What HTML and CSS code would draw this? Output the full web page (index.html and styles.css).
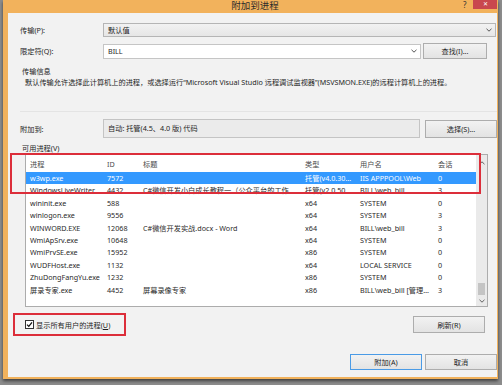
FILE: index.html
```html
<!DOCTYPE html>
<html lang="zh-CN">
<head>
    <meta charset="UTF-8">
    <meta name="viewport" content="width=device-width, initial-scale=1.0">
    <title>附加到进程</title>
    <link rel="stylesheet" href="styles.css">
</head>
<body>
    <div class="window">
        <div class="titlebar">
            <span class="title">附加到进程</span>
            <span class="help">?</span>
            <span class="close">&#x2715;</span>
        </div>

        <div class="content">
            <div class="field-row row-transport">
                <label>传输(P):</label>
                <div class="combo combo-readonly">
                    <span>默认值</span>
                    <svg class="arrow" width="6" height="4" viewBox="0 0 6 4"><path d="M0.5 0.8 L3 3.2 L5.5 0.8" fill="none" stroke="#555" stroke-width="1"/></svg>
                </div>
            </div>

            <div class="field-row row-qualifier">
                <label>限定符(Q):</label>
                <div class="combo combo-edit">
                    <span>BILL</span>
                    <svg class="arrow" width="6" height="4" viewBox="0 0 6 4"><path d="M0.5 0.8 L3 3.2 L5.5 0.8" fill="none" stroke="#555" stroke-width="1"/></svg>
                </div>
                <button class="btn btn-find">查找(I)...</button>
            </div>

            <div class="group">
                <div class="group-title">传输信息</div>
                <p class="group-text">默认传输允许选择此计算机上的进程，或选择运行“Microsoft Visual Studio 远程调试监视器”(MSVSMON.EXE)的远程计算机上的进程。</p>
            </div>

            <div class="field-row row-attach">
                <label>附加到:</label>
                <div class="readonly-field">自动: 托管(4.5、4.0 版) 代码</div>
                <button class="btn btn-select">选择(S)...</button>
            </div>

            <div class="group-title list-title">可用进程(V)</div>

            <div class="listview">
                <div class="table" id="processTable">
                    <div class="row header">
                        <span>进程</span><span>ID</span><span>标题</span><span>类型</span><span>用户名</span><span>会话</span>
                    </div>
                </div>
                <div class="scrollbar">
                    <div class="sb-arrow sb-up">
                        <svg width="6" height="4" viewBox="0 0 6 4"><path d="M0.5 3.2 L3 0.8 L5.5 3.2" fill="none" stroke="#606060" stroke-width="1"/></svg>
                    </div>
                    <div class="sb-track"><div class="sb-thumb"></div></div>
                    <div class="sb-arrow sb-down">
                        <svg width="6" height="4" viewBox="0 0 6 4"><path d="M0.5 0.8 L3 3.2 L5.5 0.8" fill="none" stroke="#606060" stroke-width="1"/></svg>
                    </div>
                </div>
            </div>

            <div class="options-row">
                <div class="check">
                    <svg width="9" height="9" viewBox="0 0 9 9"><rect x="0.5" y="0.5" width="8" height="8" fill="#fff" stroke="#333"/><path d="M2 4.6 L3.8 6.4 L7 2.4" fill="none" stroke="#111" stroke-width="1.3"/></svg>
                    <span>显示所有用户的进程(<u>U</u>)</span>
                </div>
                <button class="btn btn-refresh">刷新(R)</button>
            </div>

            <div class="dialog-buttons">
                <button class="btn btn-default">附加(A)</button>
                <button class="btn btn-cancel">取消</button>
            </div>
        </div>
    </div>

    <!-- annotation boxes from the screenshot -->
    <div class="mark mark-list"></div>
    <div class="mark mark-check"></div>

    <script>
        const processes = [
            ['w3wp.exe', '7572', '', '托管(v4.0.30…', 'IIS APPPOOL\\Web', '0', true],
            ['WindowsLiveWriter…', '4432', 'C#微信开发小白成长教程一（公众平台的工作…', '托管(v2.0.50…', 'BILL\\web_bill', '3'],
            ['wininit.exe', '588', '', 'x64', 'SYSTEM', '0'],
            ['winlogon.exe', '9556', '', 'x64', 'SYSTEM', '3'],
            ['WINWORD.EXE', '12068', 'C#微信开发实战.docx - Word', 'x64', 'BILL\\web_bill', '3'],
            ['WmiApSrv.exe', '10648', '', 'x64', 'SYSTEM', '0'],
            ['WmiPrvSE.exe', '15952', '', 'x86', 'SYSTEM', '0'],
            ['WUDFHost.exe', '1132', '', 'x64', 'LOCAL SERVICE', '0'],
            ['ZhuDongFangYu.exe', '1232', '', 'x86', 'SYSTEM', '0'],
            ['屏录专家.exe', '4452', '屏幕录像专家', 'x86', 'BILL\\web_bill [管理…', '3']
        ];

        const table = document.getElementById('processTable');
        processes.forEach(p => {
            const row = document.createElement('div');
            row.className = p[6] ? 'row item selected' : 'row item';
            for (let i = 0; i < 6; i++) {
                const cell = document.createElement('span');
                cell.textContent = p[i];
                row.appendChild(cell);
            }
            table.appendChild(row);
        });
    </script>
</body>
</html>
```

FILE: styles.css
```css
body {
    margin: 0;
    width: 502px;
    height: 385px;
    position: relative;
    overflow: hidden;
    background-color: #8c8c8c;
    font-family: "Noto Sans", "Noto Sans CJK SC", sans-serif;
    font-size: 7.2px;
    color: #1e1e1e;
}
.window {
    margin-left: 3px;
    width: 495px;
    height: 379px;
    box-sizing: border-box;
    padding: 0 1px 2px 5px;
    background-color: #f2b25c;
    display: flex;
    flex-direction: column;
    box-shadow: 0 2px 3px rgba(0,0,0,0.55);
}
.titlebar {
    height: 13px;
    margin: 0 -1px 0 -5px;
    display: flex;
    align-items: flex-start;
    flex-shrink: 0;
}
.title {
    flex: 1;
    text-align: center;
    padding-left: 44px;
    font-size: 9.5px;
    line-height: 11px;
    color: #2b2b2b;
}
.help {
    width: 10px;
    font-size: 8px;
    line-height: 9px;
    color: #333;
}
.close {
    width: 24px;
    height: 9px;
    margin-right: 1px;
    background-color: #c9474e;
    color: #fff;
    font-size: 6px;
    line-height: 9px;
    text-align: center;
}
.content {
    flex: 1;
    background-color: #f2f2f2;
    padding: 10px 0 0 12px;
    display: flex;
    flex-direction: column;
}
.field-row {
    display: flex;
    align-items: center;
}
.field-row label {
    width: 83px;
    flex-shrink: 0;
}
.combo {
    box-sizing: border-box;
    display: flex;
    align-items: center;
    justify-content: space-between;
    padding: 0 3px 0 4px;
    border: 1px solid #b5b5b5;
}
.combo-readonly {
    width: 393px;
    height: 14px;
    background: linear-gradient(#f2f2f2, #e6e6e6);
}
.combo-edit {
    width: 318px;
    height: 15px;
    background-color: #fff;
    border-color: #c5c5c5;
}
.row-qualifier {
    margin-top: 6px;
}
.btn {
    box-sizing: border-box;
    font-family: inherit;
    font-size: 7.2px;
    color: #1e1e1e;
    padding: 0;
    background: linear-gradient(#f2f2f2, #e3e3e3);
    border: 1px solid #adadad;
}
.btn-find {
    margin-left: 2px;
    width: 64px;
    height: 16px;
}
.group {
    margin-top: 7px;
    height: 46px;
    box-sizing: border-box;
    border-bottom: 1px solid #e4e4e4;
}
.group-title {
    padding-left: 2px;
    line-height: 10px;
}
.group-text {
    margin: 1px 0 0 5px;
    line-height: 10px;
    white-space: nowrap;
}
.row-attach {
    margin-top: 7px;
}
.readonly-field {
    box-sizing: border-box;
    width: 317px;
    height: 19px;
    padding-left: 4px;
    line-height: 17px;
    background-color: #ebebeb;
    border: 1px solid #c4c4c4;
}
.btn-select {
    margin-left: 5px;
    width: 72px;
    height: 18px;
}
.list-title {
    margin-top: 5px;
}
.listview {
    margin: 1px 0 0 5px;
    width: 463px;
    height: 153px;
    box-sizing: border-box;
    border: 1px solid #acacac;
    background-color: #fff;
    display: flex;
}
.table {
    flex: 1;
}
.row {
    display: grid;
    grid-template-columns: 77px 36px 162px 55px 78px 1fr;
    white-space: nowrap;
}
.row span {
    padding-left: 4px;
}
.header {
    height: 17px;
    line-height: 19px;
    color: #4a4a4a;
}
.item {
    height: 12.4px;
    line-height: 12.4px;
    color: #2a2a2a;
}
.selected {
    background-color: #3399ff;
    color: #fff;
}
.scrollbar {
    width: 11px;
    display: flex;
    flex-direction: column;
    background-color: #eaeaea;
}
.sb-arrow {
    display: flex;
    align-items: center;
    justify-content: center;
}
.sb-up {
    height: 16px;
}
.sb-down {
    height: 10px;
}
.sb-track {
    flex: 1;
    display: flex;
    flex-direction: column;
    justify-content: flex-end;
    align-items: center;
    padding-bottom: 1px;
}
.sb-thumb {
    width: 7px;
    height: 12px;
    background-color: #c4c4c4;
}
.options-row {
    margin-top: 9px;
    height: 17px;
    display: flex;
    align-items: center;
    justify-content: space-between;
    padding: 0 12px 0 5px;
}
.check {
    display: flex;
    align-items: center;
    gap: 2px;
}
.btn-refresh {
    width: 72px;
    height: 17px;
}
.dialog-buttons {
    margin-top: 21px;
    display: flex;
    justify-content: flex-end;
    gap: 3px;
}
.dialog-buttons .btn {
    width: 72px;
    height: 16px;
}
.btn-default {
    border-color: #4a9be6;
}
.mark {
    position: absolute;
    border: 2px solid #dc2e3a;
    box-sizing: border-box;
}
.mark-list {
    left: 10px;
    top: 153px;
    width: 471px;
    height: 41px;
}
.mark-check {
    left: 13px;
    top: 313px;
    width: 113px;
    height: 23px;
}
```
